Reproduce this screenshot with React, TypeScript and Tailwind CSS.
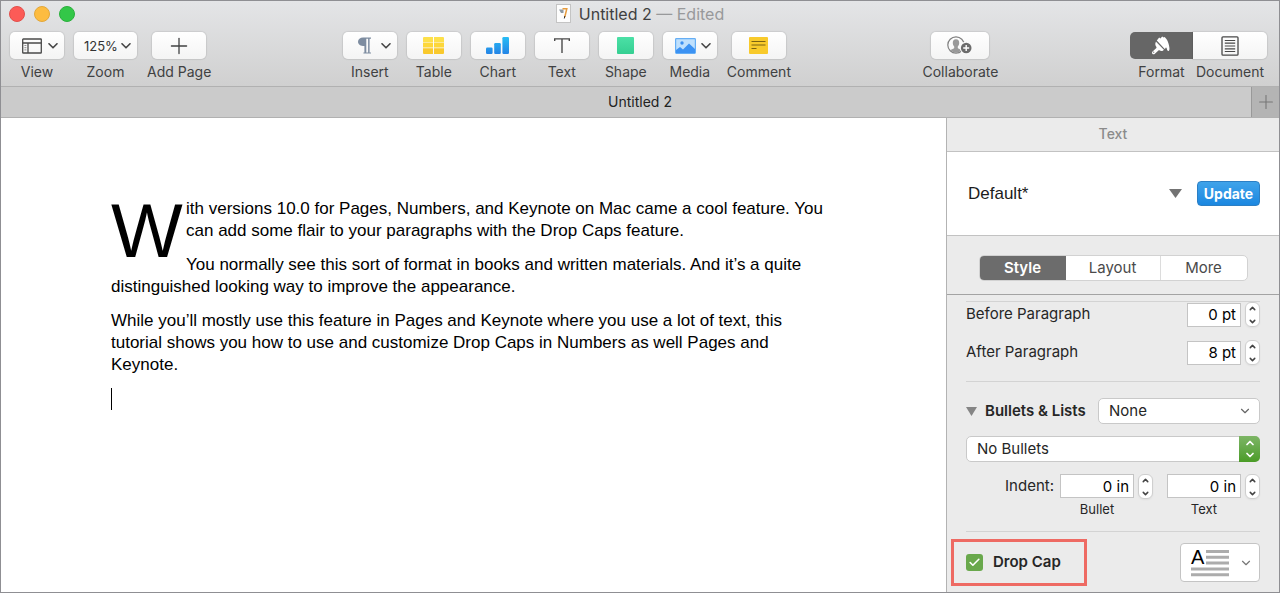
import type { ReactNode } from 'react';
import { Check, ChevronDown, ChevronUp, Plus } from 'lucide-react';

interface ToolProps {
  label: string;
  menu?: boolean;
  width?: string;
  children: ReactNode;
}

function Tool({ label, menu, width = 'w-[54px]', children }: ToolProps) {
  return (
    <button type="button" className="flex flex-col items-center gap-1 text-sm leading-[18px] text-[#404142]">
      <span
        className={`${width} ${
          menu ? 'justify-between pl-3 pr-1.5' : 'justify-center'
        } h-[27px] flex items-center rounded-[5px] bg-linear-to-b from-white to-[#f4f4f4] shadow-[0_0_1px_1px_rgba(0,0,0,0.08)]`}
      >
        {children}
        {menu && <Chevron />}
      </span>
      <span className="whitespace-nowrap">{label}</span>
    </button>
  );
}

function Chevron() {
  return (
    <svg width="10" height="6" viewBox="0 0 10 6" fill="none" stroke="#454545" strokeWidth="1.6">
      <path d="M1 0.8l4 4 4-4" strokeLinecap="round" strokeLinejoin="round" />
    </svg>
  );
}

function ViewIcon() {
  return (
    <svg width="20" height="16" viewBox="0 0 20 16" fill="none" stroke="#4a4a4a" strokeWidth="1.3">
      <rect x="0.7" y="1" width="18.6" height="14" rx="0.6" />
      <path d="M0.7 5h18.6M6 5v10" />
      <path d="M2.4 7.5h2M2.4 9.7h2M2.4 11.9h2" strokeWidth="0.6" />
    </svg>
  );
}

function InsertIcon() {
  return (
    <svg width="18" height="17" viewBox="-3 0 18 17" fill="#7d8ca0">
      <path d="M5 0.4h8v1.4h-1.4V15.6H13v0.9H9.2v-0.9h0.9V1.8H8.3v13.8h1v0.9H5.4v-0.9h1V9C2.6 9 0 7.4 0 4.7 0 2 2.2 0.4 5 0.4z" />
    </svg>
  );
}

function TableIcon() {
  return (
    <svg width="21" height="17" viewBox="0 0 21 17">
      <path d="M1 0h9v5H0V1a1 1 0 011-1z" fill="#fde04a" />
      <path d="M11 0h9a1 1 0 011 1v4H11z" fill="#fde04a" />
      <path d="M0 5.6h10v5H0zM11 5.6h10v5H11z" fill="#fdd73a" />
      <path d="M0 11.2h10V17H1a1 1 0 01-1-1zM11 11.2h10V16a1 1 0 01-1 1h-9z" fill="#f9c92d" />
    </svg>
  );
}

function ChartIcon() {
  return (
    <svg width="23" height="17" viewBox="0 0 23 17">
      <defs>
        <linearGradient id="bars" x1="0" y1="0" x2="0" y2="17" gradientUnits="userSpaceOnUse">
          <stop offset="0" stopColor="#27bdf5" />
          <stop offset="1" stopColor="#2484e6" />
        </linearGradient>
      </defs>
      <g fill="url(#bars)">
        <rect x="0" y="10.5" width="6.6" height="6.5" rx="1.2" />
        <rect x="8.2" y="6" width="6.6" height="11" rx="1.2" />
        <rect x="16.4" y="0" width="6.6" height="17" rx="1.2" />
      </g>
    </svg>
  );
}

function TextIcon() {
  return (
    <svg width="16" height="16" viewBox="0 0 16 16" fill="none" stroke="#4a4a4a" strokeWidth="1.4">
      <path d="M0.7 3V0.9h14.6V3M8 0.9V15" />
    </svg>
  );
}

function MediaIcon() {
  return (
    <svg width="21" height="16" viewBox="0 0 21 16">
      <rect x="0.6" y="0.6" width="19.8" height="14.8" rx="0.8" fill="#bfe0fd" stroke="#65aef5" strokeWidth="1.2" />
      <circle cx="7" cy="5" r="1.7" fill="#3c8ff0" />
      <path d="M1 12l4-3 3 2.4 6-6L20 11v4H1z" fill="#3c92f3" />
    </svg>
  );
}

function CommentIcon() {
  return (
    <svg width="19" height="17" viewBox="0 0 19 17">
      <rect width="19" height="17" rx="1" fill="#f8ca2b" />
      <path d="M2.5 4.5h14M2.5 8h14M2.5 11.5h5" stroke="#7b6212" strokeWidth="1.2" />
    </svg>
  );
}

function CollaborateIcon() {
  return (
    <svg width="26" height="19" viewBox="0 0 26 19">
      <circle cx="9" cy="9" r="8.2" fill="none" stroke="#808080" strokeWidth="1.2" />
      <path
        d="M9 3.2c-2.2 0-3.3 1.5-3.2 3.6 0 1.7.6 2.8 1.4 3.6v1.5c-.3.9-2.4 1.2-3.8 2.2 1.5 1.7 3.4 2.6 5.6 2.6s4.1-.9 5.6-2.6c-1.4-1-3.5-1.3-3.8-2.2v-1.5c.8-.8 1.4-1.9 1.4-3.6.1-2.1-1-3.6-3.2-3.6z"
        fill="#999"
      />
      <circle cx="19.2" cy="12" r="6.4" fill="#f9f9f9" />
      <circle cx="19.2" cy="12" r="5.3" fill="#6c6c6c" />
      <path d="M19.2 9v6M16.2 12h6" stroke="#fff" strokeWidth="1.4" />
    </svg>
  );
}

function BrushIcon() {
  return (
    <svg width="20" height="19" viewBox="0 0 20 19" fill="#fff">
      <path d="M5.8 4.6L8.2 1.4l1.2 1.1L11.2 0.4l1.5 1.2 1-.6L15.4 3c1.6 2.3 2.6 5.2 3 8.8.2 2-.1 3.2-1 3.2-1 0-1.3-.8-1.5-1.9-.2-1-.5-1.8-.9-1.7-.5.1-.6 1.2-1.3 1.7z" />
      <path d="M5 5.6l8 8.2-1.2 1c-1.2.5-2.4.2-3.4-.5l-.7-.1-3.8 3.6c-.8.7-1.8.7-2.4.1-.7-.7-.6-1.6.1-2.3l3.8-3.6.1-.9C4.4 9.9 3.700 8.2 5 5.600z" />
      <circle cx="2.700" cy="16.200" r="0.600" fill="#666" />
      <path d="M4.800 5l8.600 8.700" stroke="#666" strokeWidth="0.600" />
    </svg>
  );
}

function DocumentIcon() {
  return (
    <svg width="18" height="20" viewBox="0 0 18 20" fill="none" stroke="#484848" strokeWidth="1.3">
      <rect x="1" y="0.8" width="16" height="18.4" rx="1" />
      <path d="M3.8 4.5h10.4M3.8 7.2h10.4M3.8 10h10.4M3.8 12.8h10.4M3.8 15.5h10.4" strokeWidth="1.2" />
    </svg>
  );
}

function FileIcon() {
  return (
    <svg width="15" height="19" viewBox="0 0 15 19">
      <rect x="0.5" y="0.5" width="14" height="18" fill="#fdfdfd" stroke="#c4c4c4" />
      <path d="M3 5.500h4.500v3.500h-2.500z" fill="#8e9aa3" />
      <path d="M6.500 4.800h4.300L8.800 13" fill="none" stroke="#e79b3c" strokeWidth="1.500" />
      <path d="M8.800 12l-.5 2.500" stroke="#333" strokeWidth="1" />
    </svg>
  );
}

function Stepper({ label }: { label: string }) {
  return (
    <span className="w-[15px] h-[25px] flex flex-col items-center justify-center gap-1 rounded-[6px] bg-white border border-[#cfcfcf] shadow-xs">
      <button type="button" aria-label={`Increase ${label}`}>
        <ChevronUp size={9} strokeWidth={4} color="#444" />
      </button>
      <button type="button" aria-label={`Decrease ${label}`}>
        <ChevronDown size={9} strokeWidth={4} color="#444" />
      </button>
    </span>
  );
}

interface SpacingRowProps {
  id: string;
  label: string;
  value: string;
}

function SpacingRow({ id, label, value }: SpacingRowProps) {
  return (
    <div className="flex items-center h-[25px]">
      <label htmlFor={id} className="flex-1">
        {label}
      </label>
      <input
        id={id}
        defaultValue={value}
        className="w-[54px] h-6 mr-1 px-1 text-right text-black bg-white border border-[#c4c4c4]"
      />
      <Stepper label={label} />
    </div>
  );
}

function IndentField({ id, label, value }: SpacingRowProps) {
  return (
    <div className="flex gap-1">
      <div className="flex flex-col items-center">
        <input
          id={id}
          defaultValue={value}
          className="w-[74px] h-6 px-1 text-right text-black bg-white border border-[#c4c4c4]"
        />
        <label htmlFor={id} className="mt-0.5 text-[13px] leading-[18px]">
          {label}
        </label>
      </div>
      <Stepper label={label} />
    </div>
  );
}

function Toolbar() {
  return (
    <div className="flex items-start justify-between pl-[9px] pr-3 pt-1.5 h-[60px]">
      <div className="flex gap-[10px]">
        <Tool label="View" menu>
          <ViewIcon />
        </Tool>
        <button type="button" className="flex flex-col items-center gap-1 text-sm leading-[18px] text-[#404142]">
          <span className="w-[63px] h-[27px] flex items-center justify-between pl-[10px] pr-1.5 rounded-[5px] bg-linear-to-b from-white to-[#f4f4f4] shadow-[0_0_1px_1px_rgba(0,0,0,0.08)]">
            <span className="text-[13px] text-[#333]">125%</span>
            <Chevron />
          </span>
          Zoom
        </button>
        <Tool label="Add Page">
          <Plus size={26} strokeWidth={1.2} />
        </Tool>
      </div>

      <div className="flex gap-[10px]">
        <Tool label="Insert" menu>
          <InsertIcon />
        </Tool>
        <Tool label="Table">
          <TableIcon />
        </Tool>
        <Tool label="Chart">
          <ChartIcon />
        </Tool>
        <Tool label="Text">
          <TextIcon />
        </Tool>
        <Tool label="Shape">
          <span className="w-[17px] h-[17px] rounded-[1px] bg-linear-to-b from-[#4be0a6] to-[#35cf92]" />
        </Tool>
        <Tool label="Media" menu>
          <MediaIcon />
        </Tool>
        <Tool label="Comment">
          <CommentIcon />
        </Tool>
      </div>

      <Tool label="Collaborate" width="w-[58px]">
        <CollaborateIcon />
      </Tool>

      <div className="flex text-sm leading-[18px] text-[#404142]">
        <button type="button" aria-pressed="true" className="w-[63px] flex flex-col items-center gap-1">
          <span className="w-full h-[27px] flex items-center justify-center rounded-l-[5px] bg-[#666]">
            <BrushIcon />
          </span>
          Format
        </button>
        <button type="button" aria-pressed="false" className="w-[74px] flex flex-col items-center gap-1">
          <span className="w-full h-[27px] flex items-center justify-center rounded-r-[5px] bg-linear-to-b from-white to-[#f4f4f4] shadow-[0_0_1px_1px_rgba(0,0,0,0.08)]">
            <DocumentIcon />
          </span>
          Document
        </button>
      </div>
    </div>
  );
}

function Page() {
  return (
    <main className="flex-1 bg-white pt-20 px-[110px] font-['Liberation_Sans',Arial,sans-serif] text-[17px] leading-[22px] text-black">
      <div className="max-w-[720px]">
        <p className="mb-3">
          <span className="float-left w-[75px] h-[66px] text-[76px] leading-[66px]">W</span>
          ith versions 10.0 for Pages, Numbers, and Keynote on Mac came a cool feature. You can add some flair to your
          paragraphs with the Drop Caps feature.
        </p>
        <p className="mb-3">
          You normally see this sort of format in books and written materials. And it’s a quite distinguished looking way
          to improve the appearance.
        </p>
        <p className="mb-3">
          While you’ll mostly use this feature in Pages and Keynote where you use a lot of text, this tutorial shows you
          how to use and customize Drop Caps in Numbers as well Pages and Keynote.
        </p>
        <div className="w-px h-[22px] bg-black" />
      </div>
    </main>
  );
}

function Inspector() {
  return (
    <aside className="w-[333px] shrink-0 bg-[#ebebeb] border-l border-[#b3b3b3] text-[15px] text-[#262626]">
      <h2 className="h-[33px] leading-[31px] text-center text-sm font-medium text-[#8b8b8b]">Text</h2>

      <div className="flex items-center h-[85px] pl-[21px] pr-[19px] bg-white border-y border-[#c2c2c2]">
        <button
          type="button"
          className="flex-1 flex items-center justify-between mr-[15px] font-['Liberation_Sans',Arial,sans-serif] text-[17px] text-[#1c1c1c]"
        >
          Default*
          <svg width="13" height="9" viewBox="0 0 13 9" fill="#737373">
            <path d="M0 0h13L6.5 9z" />
          </svg>
        </button>
        <button
          type="button"
          className="w-[63px] h-[25px] rounded-[4px] border border-[#2c7fc4] bg-linear-to-b from-[#3fa3ea] to-[#1a87e0] text-sm font-bold text-white"
        >
          Update
        </button>
      </div>

      <div className="flex justify-center pt-[19px] h-[59px] border-b border-[#a3a3a3]">
        <div className="flex w-[269px] h-[26px] rounded-[5px] overflow-hidden bg-white border border-[#d2d2d2] text-[#4a4a4a]">
          <button type="button" className="w-[86px] bg-[#6c6c6c] font-semibold text-white">
            Style
          </button>
          <button type="button" className="flex-1 border-r border-[#dcdcdc]">
            Layout
          </button>
          <button type="button" className="w-[86px]">
            More
          </button>
        </div>
      </div>

      <div className="px-[19px] pt-[6px]">
        <section className="border-y border-[#d3d3d3] pb-4 flex flex-col gap-[13px]">
          <SpacingRow id="before" label="Before Paragraph" value="0 pt" />
          <SpacingRow id="after" label="After Paragraph" value="8 pt" />
        </section>

        <section className="pt-4 pb-[13px] border-b border-[#d3d3d3]">
          <div className="flex items-center">
            <svg width="11" height="9" viewBox="0 0 11 9" fill="#858585">
              <path d="M0 0h11L5.5 9z" />
            </svg>
            <label htmlFor="list-style" className="flex-1 pl-2 font-semibold whitespace-nowrap">
              Bullets &amp; Lists
            </label>
            <span className="relative">
              <select
                id="list-style"
                className="appearance-none block w-[162px] h-[26px] pl-[10px] bg-white rounded-[5px] border border-[#c9c9c9]"
              >
                <option>None</option>
              </select>
              <ChevronDown size={14} color="#666" className="absolute right-2 top-1.5 pointer-events-none" />
            </span>
          </div>

          <div className="relative mt-3">
            <select
              aria-label="Bullet type"
              className="appearance-none block w-full h-[26px] pl-[10px] bg-white rounded-[5px] border border-[#c9c9c9]"
            >
              <option>No Bullets</option>
            </select>
            <span className="absolute right-0 top-0 w-[21px] h-[26px] flex flex-col items-center justify-center rounded-r-[5px] bg-linear-to-b from-[#7db565] to-[#4a9c25] pointer-events-none">
              <ChevronUp size={12} strokeWidth={3.5} color="#fff" />
              <ChevronDown size={12} strokeWidth={3.5} color="#fff" />
            </span>
          </div>

          <div className="flex justify-end mt-3">
            <span className="mr-[6px] leading-6">Indent:</span>
            <div className="flex gap-[14px]">
              <IndentField id="indent-bullet" label="Bullet" value="0 in" />
              <IndentField id="indent-text" label="Text" value="0 in" />
            </div>
          </div>
        </section>

        <section className="flex items-center justify-between pt-[7px] pb-[6px]">
          <div className="-ml-[15px] w-[136px] h-[47px] flex items-center pl-3 border-3 border-[#ee6a63]">
            <span className="relative w-[17px] h-[17px]">
              <input
                id="drop-cap"
                type="checkbox"
                defaultChecked
                className="appearance-none block w-[17px] h-[17px] rounded-[3px] bg-[#69a84c]"
              />
              <Check size={13} strokeWidth={3} color="#fff" className="absolute left-0.5 top-0.5 pointer-events-none" />
            </span>
            <label htmlFor="drop-cap" className="pl-[10px] font-semibold">
              Drop Cap
            </label>
          </div>
          <button
            type="button"
            aria-label="Drop cap style"
            className="w-20 h-[39px] flex items-center justify-between pl-[10px] pr-1.5 bg-white rounded-[4px] border border-[#c4c4c4]"
          >
            <span className="relative leading-5">
              <svg width="38" height="28" viewBox="0 0 38 28">
                <path
                  d="M15 2.500h23M15 8.300h23M15 14.100h23M0 20h38M0 25.800h38"
                  stroke="#acacac"
                  strokeWidth="3"
                />
              </svg>
              <span className="absolute left-0 -top-1 font-['Liberation_Sans',Arial,sans-serif] text-xl leading-6 text-black">
                A
              </span>
            </span>
            <ChevronDown size={14} color="#777" />
          </button>
        </section>
      </div>
    </aside>
  );
}

export default function App() {
  return (
    <div className="min-h-screen flex flex-col border border-[#8f8f93] bg-white font-[Inter,sans-serif]">
      <header className="bg-linear-to-b from-[#e4e5e7] to-[#d0d0d0]">
        <div className="relative h-[25px] flex items-center justify-center gap-2">
          <div className="absolute left-2 flex gap-[9px]">
            <button type="button" aria-label="Close" className="w-4 h-4 rounded-full bg-[#fc5b57] border border-[#e2504c]" />
            <button type="button" aria-label="Minimize" className="w-4 h-4 rounded-full bg-[#fdbc40] border border-[#e2a73a]" />
            <button type="button" aria-label="Zoom window" className="w-4 h-4 rounded-full bg-[#33c748] border border-[#2bb03d]" />
          </div>
          <FileIcon />
          <h1 className="text-base leading-5 text-[#3f3f40]">
            Untitled 2 <span className="text-[#98999b]">— Edited</span>
          </h1>
        </div>
        <Toolbar />
      </header>

      <div className="flex h-8 bg-[#cbcbcb] border-y border-[#b1b1b1] text-sm text-[#222]">
        <button type="button" className="flex-1 pl-7">
          Untitled 2
        </button>
        <button
          type="button"
          aria-label="New tab"
          className="w-7 flex items-center justify-center bg-[#b4b4b4] border-l border-[#999]"
        >
          <Plus size={22} strokeWidth={1.2} color="#777" />
        </button>
      </div>

      <div className="flex-1 flex">
        <Page />
        <Inspector />
      </div>
    </div>
  );
}
